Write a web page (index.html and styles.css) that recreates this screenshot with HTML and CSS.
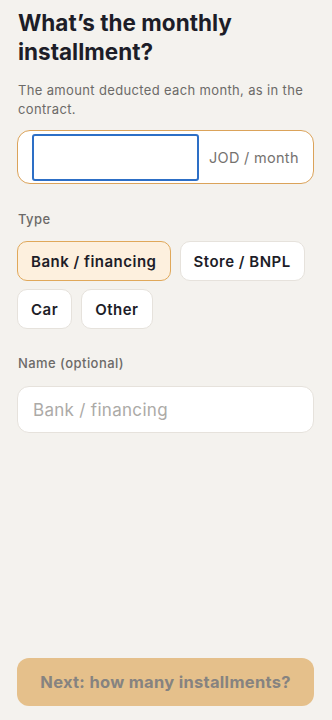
FILE: index.html
```html
<!DOCTYPE html>
<html>
<head>
<meta charset="utf-8">
<link rel="stylesheet" href="styles.css">
</head>
<body>
<div class="screen">
  <div class="content">
    <h1 class="title">What’s the monthly installment?</h1>
    <p class="sub">The amount deducted each month, as in the contract.</p>
    <div class="amount">
      <input class="amount-input" type="text">
      <span class="unit">JOD / month</span>
    </div>
    <div class="label type-label">Type</div>
    <div class="chips">
      <button class="chip selected">Bank / financing</button>
      <button class="chip">Store / BNPL</button>
      <button class="chip">Car</button>
      <button class="chip">Other</button>
    </div>
    <div class="label name-label">Name (optional)</div>
    <input class="name-input" type="text" placeholder="Bank / financing">
  </div>
  <button class="next">Next: how many installments?</button>
</div>
</body>
</html>
```
FILE: styles.css
```css
* { box-sizing: border-box; }
html, body { margin: 0; padding: 0; }
body {
  background: #f4f2ee;
  font-family: "Inter", "Lato", sans-serif;
  color: #1d1d28;
}
.screen {
  height: 720px;
  display: flex;
  flex-direction: column;
  padding: 0 18px 14px 17px;
}
.content { flex: 1; }
.title {
  margin: 8px 0 0 1px;
  font-size: 22.5px;
  line-height: 29px;
  font-weight: 700;
  letter-spacing: 0;
  color: #1d1d28;
}
.sub {
  margin: 15px 0 0 1px;
  font-size: 13px;
  line-height: 19px;
  letter-spacing: 0.35px;
  color: #6c6a68;
}
.amount {
  margin-top: 11px;
  height: 54px;
  border: 1.5px solid #dba35a;
  border-radius: 13px;
  background: #fff;
  display: flex;
  align-items: center;
  padding: 0 10px 0 14px;
  gap: 10px;
}
.amount-input {
  width: 167px;
  height: 47px;
  border: 2px solid #2d6fc6;
  border-radius: 3px;
  outline: none;
  background: #fff;
  font: inherit;
}
.unit {
  font-size: 14.5px;
  letter-spacing: 0.3px;
  color: #75726f;
}
.label {
  font-size: 13px;
  font-weight: 500;
  letter-spacing: 0.45px;
  color: #6c6a68;
  margin-left: 1px;
}
.type-label { margin-top: 27px; }
.chips {
  margin-top: 14px;
  display: flex;
  flex-wrap: wrap;
  gap: 8px 9px;
  width: 300px;
}
.chip {
  height: 40px;
  padding: 0 13px;
  border: 1.5px solid #e6e2dc;
  border-radius: 10px;
  background: #fff;
  font-family: inherit;
  font-size: 15px;
  font-weight: 600;
  letter-spacing: 0.5px;
  color: #1d1d28;
}
.chip.selected {
  background: #fdf0de;
  border-color: #e0a85a;
}
.name-label { margin-top: 26px; }
.name-input {
  display: block;
  margin-top: 15px;
  width: 100%;
  height: 47px;
  border: 1.5px solid #e6e2dc;
  border-radius: 12px;
  background: #fff;
  padding: 0 15px;
  font-family: inherit;
  font-size: 17px;
  letter-spacing: 0.3px;
  outline: none;
}
.name-input::placeholder { color: #acaaa7; }
.next {
  height: 48px;
  width: 100%;
  border: none;
  border-radius: 12px;
  background: #e5c08b;
  color: #868380;
  font-family: inherit;
  font-size: 16.5px;
  font-weight: 700;
  letter-spacing: 0.3px;
}
```
